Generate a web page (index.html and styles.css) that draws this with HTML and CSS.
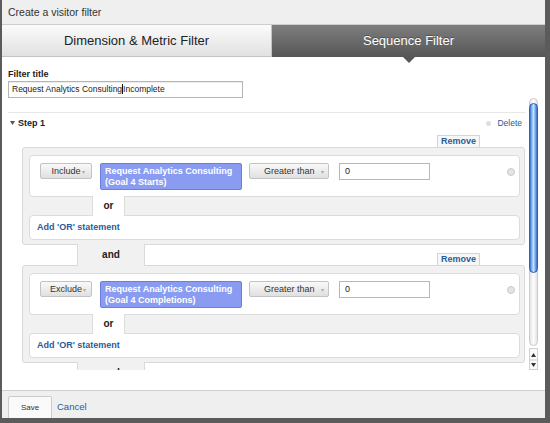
FILE: index.html
```html
<!DOCTYPE html>
<html lang="en">
<head>
  <meta charset="UTF-8">
  <meta name="viewport" content="width=device-width, initial-scale=1.0">
  <title>Create a visitor filter</title>
  <link rel="stylesheet" href="styles.css">
</head>
<body>
  <div class="dialog">
    <div class="titlebar">Create a visitor filter</div>

    <div class="tabs">
      <div class="tab">Dimension &amp; Metric Filter</div>
      <div class="tab active">Sequence Filter</div>
    </div>

    <div class="content">
      <label class="field-label">Filter title</label>
      <div class="title-input">Request Analytics Consulting<span class="caret"></span>Incomplete</div>

      <div class="scroll-wrap">
        <div class="scroll-content">
          <div class="step-head">
            <span class="step-name">
              <svg class="twisty" width="5" height="4" viewBox="0 0 5 4"><polygon points="0,0 5,0 2.5,4" fill="#555"/></svg>
              Step 1
            </span>
            <a class="delete"><span class="dot"></span>Delete</a>
          </div>

          <!-- condition 1 -->
          <div class="connector first">
            <span class="remove-tab">Remove</span>
          </div>
          <div class="step-box">
            <div class="cond">
              <span class="btn btn-mode">Include<span class="arrow">&#9662;</span></span>
              <div class="pick">Request Analytics Consulting<br>(Goal 4 Starts)</div>
              <span class="btn btn-op">Greater than<span class="arrow">&#9662;</span></span>
              <div class="value">0</div>
              <span class="clear"></span>
            </div>
            <div class="or-row"><span class="or-tab">or</span></div>
            <div class="add-or">Add 'OR' statement</div>
          </div>

          <!-- condition 2 -->
          <div class="connector">
            <span class="and-tab">and</span>
            <span class="remove-tab">Remove</span>
          </div>
          <div class="step-box">
            <div class="cond">
              <span class="btn btn-mode">Exclude<span class="arrow">&#9662;</span></span>
              <div class="pick">Request Analytics Consulting<br>(Goal 4 Completions)</div>
              <span class="btn btn-op">Greater than<span class="arrow">&#9662;</span></span>
              <div class="value">0</div>
              <span class="clear"></span>
            </div>
            <div class="or-row"><span class="or-tab">or</span></div>
            <div class="add-or">Add 'OR' statement</div>
          </div>

          <div class="connector">
            <span class="and-tab">and</span>
          </div>
        </div>

        <div class="scrollbar">
          <div class="sb-track"><div class="sb-thumb"></div></div>
          <div class="sb-arrows">
            <svg width="9" height="22" viewBox="0 0 9 22">
              <polygon points="2,8 7,8 4.5,4" fill="#333"/>
              <line x1="1" y1="11" x2="8" y2="11" stroke="#ccc"/>
              <polygon points="2,14 7,14 4.5,18" fill="#333"/>
            </svg>
          </div>
        </div>
      </div>
    </div>

    <div class="footer">
      <span class="save">Save</span>
      <a class="cancel">Cancel</a>
    </div>
  </div>
</body>
</html>
```

FILE: styles.css
```css
* {
  box-sizing: border-box;
}
body {
  margin: 0;
  font-family: "Liberation Sans", Arial, sans-serif;
  background: #fff;
}
.dialog {
  width: 550px;
  height: 423px;
  display: flex;
  flex-direction: column;
  border-left: 2px solid #5b5b5b;
  border-right: 5px solid #5b5b5b;
  border-bottom: 5px solid #5b5b5b;
  background: #fff;
  overflow: hidden;
}
.titlebar {
  flex: none;
  height: 25px;
  padding-left: 6px;
  background: #efefef;
  border-bottom: 1px solid #cdcdcd;
  font-size: 10.5px;
  line-height: 24px;
  color: #333;
}
.tabs {
  flex: none;
  display: flex;
  height: 32px;
}
.tab {
  width: 270px;
  background: linear-gradient(#fbfbfb, #e1e1e1);
  border-right: 1px solid #c4c4c4;
  border-bottom: 1px solid #c4c4c4;
  font-size: 13px;
  line-height: 31px;
  text-align: center;
  color: #222;
}
.tab.active {
  flex: 1;
  position: relative;
  background: linear-gradient(#7e7e7e, #565656);
  border: none;
  color: #fff;
  line-height: 32px;
  text-shadow: 0 -1px 0 rgba(0, 0, 0, 0.3);
}
.tab.active::after {
  content: "";
  position: absolute;
  left: 50%;
  bottom: -6px;
  margin-left: -6px;
  border-left: 6px solid transparent;
  border-right: 6px solid transparent;
  border-top: 6px solid #565656;
}

.content {
  flex: 1;
  padding: 12px 7px 0 6px;
}
.field-label {
  display: block;
  margin-bottom: 1px;
  font-size: 9px;
  font-weight: bold;
  line-height: 11px;
  color: #222;
}
.title-input {
  width: 235px;
  height: 17px;
  padding-left: 3px;
  border: 1px solid #b5b5b5;
  box-shadow: inset 0 1px 1px rgba(0, 0, 0, 0.08);
  font-size: 8.5px;
  line-height: 15px;
  color: #222;
}
.caret {
  display: inline-block;
  width: 1px;
  height: 10px;
  background: #111;
  vertical-align: -2px;
}

.scroll-wrap {
  display: flex;
  height: 272px;
  gap: 3px;
}
.scroll-content {
  flex: 1;
  overflow: hidden;
}
.step-head {
  display: flex;
  align-items: center;
  justify-content: space-between;
  height: 21px;
  margin-top: 14px;
  padding-right: 4px;
  border-top: 1px solid #e8e8e8;
}
.step-name {
  display: flex;
  align-items: center;
  gap: 3px;
  font-size: 9px;
  font-weight: bold;
  color: #222;
}
.twisty {
  margin-left: 2px;
}
.delete {
  display: flex;
  align-items: center;
  gap: 6px;
  font-size: 8.5px;
  color: #2a5b9b;
}
.dot {
  width: 5px;
  height: 5px;
  border-radius: 50%;
  background: #dedede;
}

.connector {
  display: flex;
  align-items: flex-end;
  height: 20px;
  margin: 0 1px 0 14px;
}
.connector.first {
  height: 14px;
}
.remove-tab {
  width: 43px;
  height: 12px;
  margin-left: auto;
  margin-right: 45px;
  border: 1px solid #d4d4d4;
  border-bottom: none;
  background: #f7f7f7;
  font-size: 9px;
  font-weight: bold;
  line-height: 11px;
  text-align: center;
  color: #2a5b9b;
}
.and-tab {
  position: relative;
  z-index: 1;
  align-self: stretch;
  width: 68px;
  margin: -1px 0 -1px 55px;
  background: #f1f1f1;
  border-left: 1px solid #dadada;
  border-right: 1px solid #dadada;
  font-size: 10px;
  font-weight: bold;
  line-height: 22px;
  text-align: center;
  color: #222;
}

.step-box {
  margin: 0 1px 0 14px;
  padding: 7px 4px 4px 6px;
  border: 1px solid #d9d9d9;
  border-radius: 3px;
  background: #f1f1f1;
}
.cond {
  display: flex;
  align-items: flex-start;
  height: 42px;
  padding: 7px 0 0 10px;
  border: 1px solid #dcdcdc;
  border-radius: 4px;
  background: #fff;
}
.btn {
  display: flex;
  align-items: center;
  height: 16px;
  border: 1px solid #c3c3c3;
  border-radius: 2px;
  background: linear-gradient(#f9f9f9, #e0e0e0);
  font-size: 9px;
  color: #333;
}
.btn-mode {
  width: 52px;
  margin-right: 8px;
  padding-left: 4px;
  justify-content: center;
}
.btn-op {
  width: 80px;
  margin-right: 10px;
  padding-left: 14px;
}
.arrow {
  margin-left: 1px;
  font-size: 6px;
  color: #aaa;
}
.btn-op .arrow {
  margin-left: 6px;
}
.pick {
  width: 142px;
  height: 27px;
  margin-right: 7px;
  padding: 2px 4px;
  border: 1px solid #6b7edd;
  border-radius: 2px;
  background: #8a9cf1;
  font-size: 9px;
  font-weight: bold;
  line-height: 10.5px;
  color: #fff;
}
.value {
  width: 91px;
  height: 17px;
  padding-left: 5px;
  border: 1px solid #b8b8b8;
  font-size: 9px;
  line-height: 15px;
  color: #222;
}
.clear {
  width: 8px;
  height: 8px;
  margin: 5px 4px 0 auto;
  border: 1px solid #cacaca;
  border-radius: 50%;
  background: #e4e4e4;
}
.or-row {
  display: flex;
  height: 18px;
}
.or-tab {
  position: relative;
  z-index: 1;
  align-self: stretch;
  width: 33px;
  margin: -1px 0 -1px 63px;
  background: #fff;
  border-left: 1px solid #dcdcdc;
  border-right: 1px solid #dcdcdc;
  font-size: 10px;
  font-weight: bold;
  line-height: 20px;
  text-align: center;
  color: #222;
}
.add-or {
  height: 25px;
  padding-left: 7px;
  border: 1px solid #dcdcdc;
  border-radius: 4px;
  background: #fff;
  font-size: 9px;
  font-weight: bold;
  line-height: 23px;
  color: #2a5b9b;
}

.scrollbar {
  display: flex;
  flex-direction: column;
  width: 9px;
}
.sb-track {
  flex: 1;
  padding-top: 4px;
  border: 1px solid #cbcbcb;
  border-radius: 5px;
  background: linear-gradient(90deg, #e4e4e4, #fdfdfd 50%, #e4e4e4);
}
.sb-thumb {
  height: 170px;
  margin: 0 -1px;
  border: 1px solid #2f5fae;
  border-radius: 5px;
  background: linear-gradient(90deg, #3b74cc, #9cc6f5 35%, #c4e0fb 50%, #84b4ee 70%, #3a70c6);
}
.sb-arrows {
  height: 22px;
  margin-top: 2px;
  border: 1px solid #d0d0d0;
  background: #fafafa;
}
.sb-arrows svg {
  display: block;
  margin-left: -1px;
}

.footer {
  flex: none;
  display: flex;
  align-items: flex-start;
  height: 28px;
  padding: 5px 0 0 6px;
  border-top: 1px solid #d0d0d0;
  background: #efefef;
  overflow: hidden;
}
.save {
  width: 44px;
  height: 24px;
  border: 1px solid #cbcbcb;
  border-radius: 2px;
  background: #fafafa;
  font-size: 8px;
  line-height: 22px;
  text-align: center;
  color: #333;
}
.cancel {
  margin-left: 5px;
  font-size: 9.5px;
  line-height: 22px;
  color: #2a5b9b;
}
```
